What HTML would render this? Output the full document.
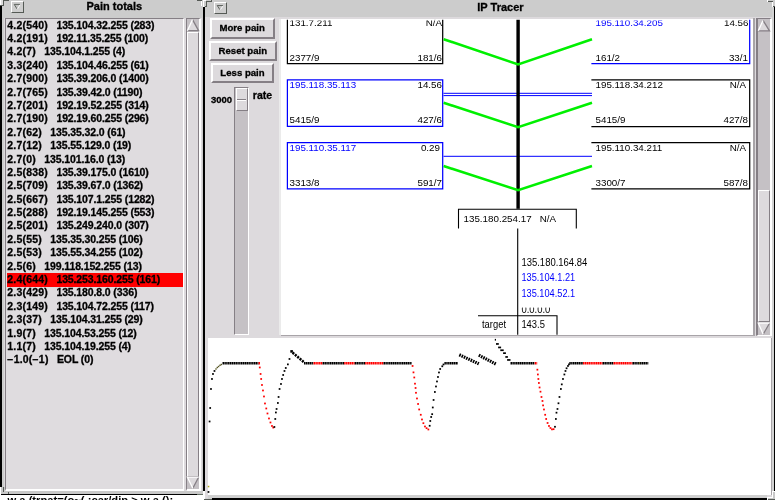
<!DOCTYPE html>
<html><head><meta charset="utf-8"><title>IP Tracer</title>
<style>
html,body{margin:0;padding:0;}
body{width:775px;height:500px;overflow:hidden;position:relative;background:#cccccc;font-family:"Liberation Sans",sans-serif;}
#root{will-change:transform;position:absolute;left:0;top:0;width:775px;height:500px;overflow:hidden;}
#root>div,#root>svg{position:absolute;}
.t{white-space:pre;color:#000;}
.lb,.ttl,.btn{-webkit-text-stroke:0.3px #000;}
.lb{font-weight:bold;font-size:10.5px;line-height:13.36px;transform:scaleY(0.96);transform-origin:0 55%;}
.ttl{font-weight:bold;font-size:11px;line-height:14px;}
.gar{font-size:11.2px;line-height:13px;font-weight:bold;}
.btn.mp{padding-right:1px;}
.btn{box-sizing:border-box;background:#dddadd;border-top:2.3px solid #fff;border-left:2.3px solid #fff;border-right:2.3px solid #857f85;border-bottom:2.4px solid #857f85;font-weight:bold;font-size:9.6px;line-height:15.6px;text-align:center;color:#000;}
svg text{font-family:"Liberation Sans",sans-serif;font-size:9.7px;}
</style></head><body><div id="root">
<div style="left:4px;top:18px;width:197.5px;height:474px;background:#dddadd;"></div>
<div style="left:0px;top:5.7px;width:1.9px;height:481px;background:#000;"></div>
<div style="left:4.5px;top:18px;width:179.5px;height:473px;background:#dfdcdf;border-top:1px solid #857f85;border-left:1px solid #857f85;border-right:1.5px solid #fff;border-bottom:2.2px solid #fff;box-sizing:border-box;"></div>
<div style="left:7px;top:273.3px;width:176px;height:13.6px;background:#ff0000;"></div>
<div class="t lb" style="left:7.3px;top:18.7px;"><span style="letter-spacing:0.2px">4.2(540)</span><span style="margin-left:8.4px;letter-spacing:-0.12px">135.104.32.255 (283)</span></div>
<div class="t lb" style="left:7.3px;top:32.09px;"><span style="letter-spacing:0.2px">4.2(191)</span><span style="margin-left:8.4px;letter-spacing:-0.12px">192.11.35.255 (100)</span></div>
<div class="t lb" style="left:7.3px;top:45.47px;"><span style="letter-spacing:0.2px">4.2(7)</span><span style="margin-left:8.4px;letter-spacing:-0.12px">135.104.1.255 (4)</span></div>
<div class="t lb" style="left:7.3px;top:58.86px;"><span style="letter-spacing:0.2px">3.3(240)</span><span style="margin-left:8.4px;letter-spacing:-0.12px">135.104.46.255 (61)</span></div>
<div class="t lb" style="left:7.3px;top:72.24px;"><span style="letter-spacing:0.2px">2.7(900)</span><span style="margin-left:8.4px;letter-spacing:-0.12px">135.39.206.0 (1400)</span></div>
<div class="t lb" style="left:7.3px;top:85.63px;"><span style="letter-spacing:0.2px">2.7(765)</span><span style="margin-left:8.4px;letter-spacing:-0.12px">135.39.42.0 (1190)</span></div>
<div class="t lb" style="left:7.3px;top:99.02px;"><span style="letter-spacing:0.2px">2.7(201)</span><span style="margin-left:8.4px;letter-spacing:-0.12px">192.19.52.255 (314)</span></div>
<div class="t lb" style="left:7.3px;top:112.4px;"><span style="letter-spacing:0.2px">2.7(190)</span><span style="margin-left:8.4px;letter-spacing:-0.12px">192.19.60.255 (296)</span></div>
<div class="t lb" style="left:7.3px;top:125.79px;"><span style="letter-spacing:0.2px">2.7(62)</span><span style="margin-left:8.4px;letter-spacing:-0.12px">135.35.32.0 (61)</span></div>
<div class="t lb" style="left:7.3px;top:139.17px;"><span style="letter-spacing:0.2px">2.7(12)</span><span style="margin-left:8.4px;letter-spacing:-0.12px">135.55.129.0 (19)</span></div>
<div class="t lb" style="left:7.3px;top:152.56px;"><span style="letter-spacing:0.2px">2.7(0)</span><span style="margin-left:8.4px;letter-spacing:-0.12px">135.101.16.0 (13)</span></div>
<div class="t lb" style="left:7.3px;top:165.95px;"><span style="letter-spacing:0.2px">2.5(838)</span><span style="margin-left:8.4px;letter-spacing:-0.12px">135.39.175.0 (1610)</span></div>
<div class="t lb" style="left:7.3px;top:179.33px;"><span style="letter-spacing:0.2px">2.5(709)</span><span style="margin-left:8.4px;letter-spacing:-0.12px">135.39.67.0 (1362)</span></div>
<div class="t lb" style="left:7.3px;top:192.72px;"><span style="letter-spacing:0.2px">2.5(667)</span><span style="margin-left:8.4px;letter-spacing:-0.12px">135.107.1.255 (1282)</span></div>
<div class="t lb" style="left:7.3px;top:206.1px;"><span style="letter-spacing:0.2px">2.5(288)</span><span style="margin-left:8.4px;letter-spacing:-0.12px">192.19.145.255 (553)</span></div>
<div class="t lb" style="left:7.3px;top:219.49px;"><span style="letter-spacing:0.2px">2.5(201)</span><span style="margin-left:8.4px;letter-spacing:-0.12px">135.249.240.0 (307)</span></div>
<div class="t lb" style="left:7.3px;top:232.88px;"><span style="letter-spacing:0.2px">2.5(55)</span><span style="margin-left:8.4px;letter-spacing:-0.12px">135.35.30.255 (106)</span></div>
<div class="t lb" style="left:7.3px;top:246.26px;"><span style="letter-spacing:0.2px">2.5(53)</span><span style="margin-left:8.4px;letter-spacing:-0.12px">135.55.34.255 (102)</span></div>
<div class="t lb" style="left:7.3px;top:259.65px;"><span style="letter-spacing:0.2px">2.5(6)</span><span style="margin-left:8.4px;letter-spacing:-0.12px">199.118.152.255 (13)</span></div>
<div class="t lb" style="left:7.3px;top:273.03px;"><span style="letter-spacing:0.2px">2.4(644)</span><span style="margin-left:8.4px;letter-spacing:-0.12px">135.253.160.255 (161)</span></div>
<div class="t lb" style="left:7.3px;top:286.42px;"><span style="letter-spacing:0.2px">2.3(429)</span><span style="margin-left:8.4px;letter-spacing:-0.12px">135.180.8.0 (336)</span></div>
<div class="t lb" style="left:7.3px;top:299.81px;"><span style="letter-spacing:0.2px">2.3(149)</span><span style="margin-left:8.4px;letter-spacing:-0.12px">135.104.72.255 (117)</span></div>
<div class="t lb" style="left:7.3px;top:313.19px;"><span style="letter-spacing:0.2px">2.3(37)</span><span style="margin-left:8.4px;letter-spacing:-0.12px">135.104.31.255 (29)</span></div>
<div class="t lb" style="left:7.3px;top:326.58px;"><span style="letter-spacing:0.2px">1.9(7)</span><span style="margin-left:8.4px;letter-spacing:-0.12px">135.104.53.255 (12)</span></div>
<div class="t lb" style="left:7.3px;top:339.96px;"><span style="letter-spacing:0.2px">1.1(7)</span><span style="margin-left:8.4px;letter-spacing:-0.12px">135.104.19.255 (4)</span></div>
<div class="t lb" style="left:7.3px;top:353.35px;"><span style="letter-spacing:0.2px">−1.0(−1)</span><span style="margin-left:8.4px;letter-spacing:-0.12px">EOL (0)</span></div>
<div style="left:186px;top:18px;width:15px;height:473px;background:#c5c1c5;border-top:1px solid #857f85;border-left:1px solid #857f85;border-right:2px solid #fff;border-bottom:2px solid #fff;box-sizing:border-box;"></div>
<div style="left:187px;top:32px;width:12px;height:444.5px;background:#dddadd;border-top:1px solid #fff;border-left:1px solid #fff;border-right:1.5px solid #857f85;border-bottom:1px solid #857f85;box-sizing:border-box;"></div>
<div style="left:1.8px;top:491px;width:201.2px;height:3px;background:#c8c8c8;"></div>
<div style="left:1.4px;top:494px;width:195.6px;height:0.9px;background:#000;"></div>
<div style="left:197px;top:494px;width:5.7px;height:0.9px;background:#667066;"></div>
<div style="left:0px;top:494.9px;width:203px;height:5.1px;background:#fff;"></div>
<div style="left:0px;top:487px;width:1.2px;height:8px;background:#fff;"></div>
<div style="left:1.2px;top:487px;width:3.4px;height:7px;background:#c8c8c8;"></div>
<div style="left:3px;top:487px;width:0.9px;height:5px;background:#555a55;"></div>
<div style="left:8px;top:492px;width:0.9px;height:2.4px;background:#555a55;"></div>
<div style="left:203px;top:490.8px;width:1.6px;height:9.2px;background:#fff;"></div>
<div style="left:204.6px;top:490.8px;width:3px;height:9.2px;background:#d4d4d4;"></div>
<div style="left:205.9px;top:492px;width:0.9px;height:4.8px;background:#555a55;"></div>
<div style="left:204px;top:498.9px;width:7.8px;height:1.1px;background:#555a55;"></div>
<div style="left:207.6px;top:495.3px;width:4px;height:2.4px;background:#d4d4d4;"></div>
<div class="t gar" style="left:7.5px;top:493.6px;">w a,(trnat=(o~(.:car/dip &gt; w a,():</div>
<div style="left:11px;top:1.1px;width:13px;height:11.8px;background:#cecece;border-top:1px solid #fff;border-left:1px solid #fff;border-right:1px solid #555a55;border-bottom:1px solid #555a55;box-sizing:border-box;"></div>
<div class="t ttl" style="left:86.5px;top:-1.5px;">Pain totals</div>
<div style="left:205.3px;top:17.3px;width:566.3px;height:480.3px;background:#dddadd;"></div>
<div style="left:771.6px;top:6px;width:2.2px;height:486px;background:#d2d2d2;"></div>
<div style="left:203.15px;top:6.8px;width:2.25px;height:484.2px;background:#000;"></div>
<div style="left:773.8px;top:7px;width:1.2px;height:484px;background:#000;"></div>
<div style="left:197px;top:0px;width:4.8px;height:0.9px;background:#555a55;"></div>
<div style="left:201px;top:1px;width:1px;height:5.2px;background:#fff;"></div>
<div style="left:202.6px;top:0px;width:1.6px;height:6.6px;background:#fff;"></div>
<div style="left:204.2px;top:0px;width:2px;height:1px;background:#fff;"></div>
<div style="left:206px;top:0.7px;width:6px;height:0.9px;background:#555a55;"></div>
<div style="left:206px;top:1.5px;width:1px;height:5px;background:#555a55;"></div>
<div style="left:204.6px;top:6px;width:2.4px;height:0.9px;background:#555a55;"></div>
<div style="left:211px;top:0px;width:1px;height:1.5px;background:#555a55;"></div>
<div style="left:767px;top:0px;width:1px;height:2px;background:#fff;"></div>
<div style="left:768px;top:1px;width:5px;height:1px;background:#555a55;"></div>
<div style="left:771.8px;top:2px;width:1.2px;height:4.6px;background:#fff;"></div>
<div style="left:773px;top:6px;width:2px;height:1px;background:#555a55;"></div>
<div style="left:0px;top:0px;width:1px;height:5px;background:#fff;"></div>
<div style="left:1px;top:0px;width:2px;height:4.6px;background:#dedede;"></div>
<div style="left:3px;top:0.4px;width:1px;height:5.4px;background:#555a55;"></div>
<div style="left:4px;top:0px;width:5px;height:0.6px;background:#555a55;"></div>
<div style="left:0.4px;top:5px;width:3.6px;height:0.8px;background:#555a55;"></div>
<div style="left:214.1px;top:2.2px;width:13px;height:11.7px;background:#cecece;border-top:1px solid #fff;border-left:1px solid #fff;border-right:1px solid #555a55;border-bottom:1px solid #555a55;box-sizing:border-box;"></div>
<div class="t ttl" style="left:477.3px;top:-0.3px;">IP Tracer</div>
<div class="btn mp" style="left:209.8px;top:18.2px;width:65.6px;height:20.8px;">More pain</div>
<div class="btn" style="left:208.7px;top:40.5px;width:68.3px;height:20.3px;">Reset pain</div>
<div class="btn" style="left:211px;top:63.1px;width:63px;height:19.8px;">Less pain</div>
<div style="left:234.2px;top:86.6px;width:14.8px;height:248.4px;background:#c5c1c5;border-top:1.5px solid #857f85;border-left:1.5px solid #857f85;border-right:1.5px solid #fff;border-bottom:1.5px solid #fff;box-sizing:border-box;"></div>
<div style="left:236px;top:88px;width:11.5px;height:22.5px;background:#dddadd;border-top:1px solid #fff;border-left:1px solid #fff;border-right:1.5px solid #857f85;border-bottom:1.5px solid #857f85;box-sizing:border-box;"></div>
<div style="left:237px;top:98.5px;width:9px;height:1px;background:#857f85;"></div>
<div style="left:237px;top:99.5px;width:9px;height:1px;background:#fff;"></div>
<div class="t lb" style="left:211px;top:93.2px;font-size:9.5px;">3000</div>
<div class="t lb" style="left:252.8px;top:89.2px;">rate</div>
<div style="left:279px;top:19.2px;width:2px;height:316px;background:#ebebeb;"></div>
<div style="left:280.9px;top:19.2px;width:472.1px;height:315.7px;background:#fff;"></div>
<div style="left:281px;top:334.8px;width:473.6px;height:1.2px;background:#a8a4a8;"></div>
<svg style="left:281px;top:19px" width="472" height="316" viewBox="281 19 472 316"><defs><clipPath id="cv"><rect x="281" y="19.7" width="472" height="315.1"/></clipPath></defs><g clip-path="url(#cv)"><path d="M287.4,10H442.7M287.4,63.5H442.7M287.4,10V63.5M442.7,10V63.5" stroke="#000" stroke-width="1.25" fill="none" stroke-linecap="square"/><path d="M287.4,79.8H442.7M287.4,126.3H442.7M287.4,79.8V126.3M442.7,79.8V126.3" stroke="#0000ff" stroke-width="1.25" fill="none" stroke-linecap="square"/><path d="M287.4,142.5H442.7M287.4,188.8H442.7M287.4,142.5V188.8M442.7,142.5V188.8" stroke="#0000ff" stroke-width="1.25" fill="none" stroke-linecap="square"/><path d="M592,10H749.7M592,63.5H749.7M749.7,10V63.5" stroke="#0000ff" stroke-width="1.25" fill="none" stroke-linecap="square"/><path d="M592,79.8H749.7M592,126.5H749.7M749.7,79.8V126.5" stroke="#000" stroke-width="1.25" fill="none" stroke-linecap="square"/><path d="M592,142.5H749.7M592,188.9H749.7M749.7,142.5V188.9" stroke="#000" stroke-width="1.25" fill="none" stroke-linecap="square"/><path d="M443.5,93.3H592M443.5,95.6H592M443.5,156.3H592" stroke="#0000ff" stroke-width="1" fill="none"/><rect x="516.4" y="19" width="3.4" height="189.8" fill="#000"/><polyline points="443.6,39.2 518.1,64.5 592,39.2" stroke="#00f000" stroke-width="2.6" fill="none" stroke-linejoin="miter"/><polyline points="443.6,102.8 518.1,127.2 592,102.8" stroke="#00f000" stroke-width="2.6" fill="none" stroke-linejoin="miter"/><polyline points="443.6,166 518.1,190.2 592,166" stroke="#00f000" stroke-width="2.6" fill="none" stroke-linejoin="miter"/><path d="M458.5,228.5V209.3H576.3V228.5" stroke="#000" stroke-width="1.1" fill="none"/><path d="M517.7,228.5V336" stroke="#000" stroke-width="1.1" fill="none"/><path d="M478,315.7H557V336" stroke="#000" stroke-width="1.1" fill="none"/><text transform="translate(289.5,25.6) scale(1.0,1)" fill="#000" text-anchor="start" style="font-size:9.8px">131.7.211</text><text transform="translate(442,25.6) scale(1.0,1)" fill="#000" text-anchor="end" style="font-size:9.8px">N/A</text><text transform="translate(289.5,60.8) scale(1.0,1)" fill="#000" text-anchor="start" style="font-size:9.8px">2377/9</text><text transform="translate(442,60.8) scale(1.0,1)" fill="#000" text-anchor="end" style="font-size:9.8px">181/6</text><text transform="translate(289.5,88.2) scale(1.0,1)" fill="#0000ff" text-anchor="start" style="font-size:9.8px">195.118.35.113</text><text transform="translate(442,88.2) scale(1.0,1)" fill="#000" text-anchor="end" style="font-size:9.8px">14.56</text><text transform="translate(289.5,123) scale(1.0,1)" fill="#000" text-anchor="start" style="font-size:9.8px">5415/9</text><text transform="translate(442,123) scale(1.0,1)" fill="#000" text-anchor="end" style="font-size:9.8px">427/6</text><text transform="translate(289.5,150.8) scale(1.0,1)" fill="#0000ff" text-anchor="start" style="font-size:9.8px">195.110.35.117</text><text transform="translate(440,150.8) scale(1.0,1)" fill="#000" text-anchor="end" style="font-size:9.8px">0.29</text><text transform="translate(289.5,185.8) scale(1.0,1)" fill="#000" text-anchor="start" style="font-size:9.8px">3313/8</text><text transform="translate(442,185.8) scale(1.0,1)" fill="#000" text-anchor="end" style="font-size:9.8px">591/7</text><text transform="translate(595.5,25.6) scale(1.0,1)" fill="#0000ff" text-anchor="start" style="font-size:9.8px">195.110.34.205</text><text transform="translate(748.5,25.6) scale(1.0,1)" fill="#000" text-anchor="end" style="font-size:9.8px">14.56</text><text transform="translate(595.5,60.8) scale(1.0,1)" fill="#000" text-anchor="start" style="font-size:9.8px">161/2</text><text transform="translate(748,60.8) scale(1.0,1)" fill="#000" text-anchor="end" style="font-size:9.8px">33/1</text><text transform="translate(595.5,88.2) scale(1.0,1)" fill="#000" text-anchor="start" style="font-size:9.8px">195.118.34.212</text><text transform="translate(746,88.2) scale(1.0,1)" fill="#000" text-anchor="end" style="font-size:9.8px">N/A</text><text transform="translate(595.5,123) scale(1.0,1)" fill="#000" text-anchor="start" style="font-size:9.8px">5415/9</text><text transform="translate(748,123) scale(1.0,1)" fill="#000" text-anchor="end" style="font-size:9.8px">427/8</text><text transform="translate(595.5,150.8) scale(1.0,1)" fill="#000" text-anchor="start" style="font-size:9.8px">195.110.34.211</text><text transform="translate(746,150.8) scale(1.0,1)" fill="#000" text-anchor="end" style="font-size:9.8px">N/A</text><text transform="translate(595.5,185.8) scale(1.0,1)" fill="#000" text-anchor="start" style="font-size:9.8px">3300/7</text><text transform="translate(748,185.8) scale(1.0,1)" fill="#000" text-anchor="end" style="font-size:9.8px">587/8</text><text transform="translate(463.5,222.3) scale(1.0,1)" fill="#000" text-anchor="start" style="font-size:9.8px">135.180.254.17&#160;&#160;&#160;N/A</text><text transform="translate(521.4,266) scale(0.904,1)" fill="#000" text-anchor="start" style="font-size:10.5px">135.180.164.84</text><text transform="translate(521.4,281.1) scale(0.878,1)" fill="#0000ff" text-anchor="start" style="font-size:10.5px">135.104.1.21</text><text transform="translate(521.4,297) scale(0.878,1)" fill="#0000ff" text-anchor="start" style="font-size:10.5px">135.104.52.1</text><text transform="translate(521.4,312.8) scale(0.9,1)" fill="#000" text-anchor="start" style="font-size:10.5px">0.0.0.0</text><text transform="translate(482,328.3) scale(0.92,1)" fill="#000" text-anchor="start" style="font-size:10.2px">target</text><text transform="translate(521.4,328.3) scale(0.92,1)" fill="#000" text-anchor="start" style="font-size:10.2px">143.5</text><rect x="288.6" y="19" width="153.2" height="1.5" fill="#fff"/><rect x="593" y="19" width="155.8" height="1.5" fill="#fff"/><rect x="520" y="302" width="34" height="5.6" fill="#fff"/></g></svg>
<div style="left:753px;top:18px;width:1.6px;height:318px;background:#a8a4a8;"></div>
<div style="left:756px;top:18px;width:15.6px;height:318px;background:#c5c1c5;border-top:1px solid #857f85;border-left:2px solid #857f85;border-right:2px solid #fff;border-bottom:1.5px solid #fff;box-sizing:border-box;"></div>
<div style="left:758px;top:190px;width:11.6px;height:131.6px;background:#dddadd;border-top:1px solid #fff;border-left:1px solid #fff;border-right:1.8px solid #857f85;border-bottom:1.8px solid #857f85;box-sizing:border-box;"></div>
<div style="left:207.7px;top:337.9px;width:563.2px;height:157.5px;background:#fff;"></div>
<div style="left:770.9px;top:337.9px;width:1px;height:157.5px;background:#a8a4a8;"></div>
<div style="left:207.7px;top:495.2px;width:559.3px;height:2.6px;background:#d0d0d0;"></div>
<div style="left:211.8px;top:497.8px;width:555px;height:2.2px;background:#000;"></div>
<div style="left:772.4px;top:490.8px;width:2.6px;height:1.1px;background:#fff;"></div>
<div style="left:771.8px;top:491px;width:1.2px;height:6.4px;background:#fff;"></div>
<div style="left:773px;top:491.9px;width:2px;height:8.1px;background:#c8c8c8;"></div>
<div style="left:767px;top:496.5px;width:6px;height:1px;background:#fff;"></div>
<div style="left:766.8px;top:497px;width:1.2px;height:3px;background:#fff;"></div>
<div style="left:768px;top:497.5px;width:7px;height:1.7px;background:#c8c8c8;"></div>
<div style="left:768px;top:499.2px;width:7px;height:0.8px;background:#555a55;"></div>
<svg style="left:207px;top:338px" width="564" height="158" viewBox="207 338 564 158"><rect x="207.6" y="491.1" width="1.75" height="1.75" fill="#000"/><rect x="208.7" y="420.6" width="1.75" height="1.75" fill="#000"/><rect x="209.3" y="407.1" width="1.75" height="1.75" fill="#000"/><rect x="210.1" y="388.1" width="1.75" height="1.75" fill="#000"/><rect x="211.1" y="378.1" width="1.75" height="1.75" fill="#000"/><rect x="212.1" y="373.1" width="1.75" height="1.75" fill="#000"/><rect x="213.6" y="370.1" width="1.75" height="1.75" fill="#000"/><rect x="207.8" y="485.8" width="1.5" height="1.5" fill="#b0a820"/><rect x="215.3" y="368.3" width="1.4" height="1.4" fill="#555522"/><rect x="216.6" y="366.8" width="1.4" height="1.4" fill="#555522"/><rect x="217.9" y="365.8" width="1.4" height="1.4" fill="#555522"/><rect x="219.3" y="364.6" width="1.4" height="1.4" fill="#555522"/><rect x="220.6" y="363.8" width="1.4" height="1.4" fill="#555522"/><path d="M222.5,363.3H258.5" stroke="#000" stroke-width="2.4" stroke-dasharray="1.5 0.35" fill="none"/><path d="M258.5,363.3H260.3" stroke="#ff0000" stroke-width="2.4" stroke-dasharray="1.5 0.35" fill="none"/><rect x="258.9" y="366.6" width="1.75" height="1.75" fill="#ff0000"/><rect x="259.7" y="373.1" width="1.75" height="1.75" fill="#ff0000"/><rect x="260.3" y="378.1" width="1.75" height="1.75" fill="#ff0000"/><rect x="261.1" y="384.1" width="1.75" height="1.75" fill="#ff0000"/><rect x="262.1" y="389.6" width="1.75" height="1.75" fill="#ff0000"/><rect x="263.1" y="395.6" width="1.75" height="1.75" fill="#ff0000"/><rect x="264.1" y="402.6" width="1.75" height="1.75" fill="#ff0000"/><rect x="265.4" y="407.6" width="1.75" height="1.75" fill="#ff0000"/><rect x="266.6" y="412.6" width="1.75" height="1.75" fill="#ff0000"/><rect x="268.1" y="417.6" width="1.75" height="1.75" fill="#ff0000"/><rect x="269.6" y="421.6" width="1.75" height="1.75" fill="#ff0000"/><rect x="271.1" y="425.1" width="1.75" height="1.75" fill="#ff0000"/><rect x="272.4" y="426.7" width="1.75" height="1.75" fill="#ff0000"/><rect x="273.5" y="426.1" width="1.75" height="1.75" fill="#000"/><rect x="274.4" y="418.1" width="1.75" height="1.75" fill="#000"/><rect x="275.0" y="411.6" width="1.75" height="1.75" fill="#000"/><rect x="275.7" y="408.1" width="1.75" height="1.75" fill="#000"/><rect x="277.0" y="402.1" width="1.75" height="1.75" fill="#000"/><rect x="277.7" y="396.1" width="1.75" height="1.75" fill="#000"/><rect x="278.7" y="388.1" width="1.75" height="1.75" fill="#000"/><rect x="280.1" y="383.1" width="1.75" height="1.75" fill="#000"/><rect x="281.1" y="378.1" width="1.75" height="1.75" fill="#000"/><rect x="282.3" y="374.1" width="1.75" height="1.75" fill="#000"/><rect x="283.6" y="370.1" width="1.75" height="1.75" fill="#000"/><rect x="284.9" y="367.1" width="1.75" height="1.75" fill="#000"/><rect x="287.0" y="363.5" width="1.75" height="1.75" fill="#000"/><rect x="288.6" y="358.1" width="1.75" height="1.75" fill="#000"/><rect x="290.3" y="350.1" width="2.6" height="2.6" fill="#000"/><path d="M292.6,352.6L304.2,362.4" stroke="#000" stroke-width="2.6" stroke-dasharray="2 1.1" fill="none"/><path d="M304,363.3H313.5" stroke="#000" stroke-width="2.4" stroke-dasharray="1.5 0.35" fill="none"/><path d="M313.5,363.3H322.6" stroke="#ff0000" stroke-width="2.4" stroke-dasharray="1.5 0.35" fill="none"/><path d="M322.6,363.3H344.2" stroke="#000" stroke-width="2.4" stroke-dasharray="1.5 0.35" fill="none"/><path d="M344.2,363.3H354.7" stroke="#ff0000" stroke-width="2.4" stroke-dasharray="1.5 0.35" fill="none"/><path d="M354.7,363.3H365.2" stroke="#000" stroke-width="2.4" stroke-dasharray="1.5 0.35" fill="none"/><path d="M365.2,363.3H383.5" stroke="#ff0000" stroke-width="2.4" stroke-dasharray="1.5 0.35" fill="none"/><path d="M383.5,363.3H411.8" stroke="#000" stroke-width="2.4" stroke-dasharray="1.5 0.35" fill="none"/><rect x="411.7" y="365.1" width="1.75" height="1.75" fill="#ff0000"/><rect x="412.6" y="371.5" width="1.75" height="1.75" fill="#ff0000"/><rect x="413.4" y="376.6" width="1.75" height="1.75" fill="#ff0000"/><rect x="414.1" y="382.8" width="1.75" height="1.75" fill="#ff0000"/><rect x="414.7" y="387.1" width="1.75" height="1.75" fill="#ff0000"/><rect x="415.1" y="391.9" width="1.75" height="1.75" fill="#ff0000"/><rect x="416.1" y="397.6" width="1.75" height="1.75" fill="#ff0000"/><rect x="417.2" y="403.1" width="1.75" height="1.75" fill="#ff0000"/><rect x="418.3" y="408.6" width="1.75" height="1.75" fill="#ff0000"/><rect x="419.9" y="413.9" width="1.75" height="1.75" fill="#ff0000"/><rect x="421.1" y="418.6" width="1.75" height="1.75" fill="#ff0000"/><rect x="422.5" y="422.3" width="1.75" height="1.75" fill="#ff0000"/><rect x="424.1" y="425.6" width="1.75" height="1.75" fill="#ff0000"/><rect x="425.7" y="427.3" width="1.75" height="1.75" fill="#ff0000"/><rect x="427.5" y="428.6" width="1.75" height="1.75" fill="#ff0000"/><rect x="428.8" y="424.9" width="1.75" height="1.75" fill="#000"/><rect x="429.4" y="420.1" width="1.75" height="1.75" fill="#000"/><rect x="430.3" y="416.1" width="1.75" height="1.75" fill="#000"/><rect x="431.3" y="413.3" width="1.75" height="1.75" fill="#000"/><rect x="431.9" y="406.6" width="1.75" height="1.75" fill="#000"/><rect x="432.7" y="399.1" width="1.75" height="1.75" fill="#000"/><rect x="434.0" y="391.1" width="1.75" height="1.75" fill="#000"/><rect x="435.1" y="385.6" width="1.75" height="1.75" fill="#000"/><rect x="436.1" y="380.6" width="1.75" height="1.75" fill="#000"/><rect x="437.1" y="376.1" width="1.75" height="1.75" fill="#000"/><rect x="438.1" y="371.6" width="1.75" height="1.75" fill="#000"/><rect x="439.3" y="368.1" width="1.75" height="1.75" fill="#000"/><rect x="441.4" y="365.4" width="1.75" height="1.75" fill="#000"/><rect x="442.6" y="363.6" width="1.75" height="1.75" fill="#000"/><path d="M444.4,363.3H458" stroke="#000" stroke-width="2.4" stroke-dasharray="1.5 0.35" fill="none"/><path d="M459.3,354.8L478.8,363.8" stroke="#000" stroke-width="3.2" stroke-dasharray="1.6 0.9" fill="none"/><path d="M478.8,355.2L495.8,364" stroke="#000" stroke-width="3.2" stroke-dasharray="1.6 0.9" fill="none"/><rect x="494.8" y="338.9" width="1.2" height="1.7" fill="#000"/><rect x="496.0" y="343.1" width="2.8" height="1.7" fill="#000"/><rect x="498.1" y="346.6" width="3.0" height="1.7" fill="#000"/><rect x="500.3" y="349.4" width="3.4" height="1.7" fill="#000"/><rect x="503.1" y="352.3" width="2.8" height="1.7" fill="#000"/><rect x="505.3" y="356.1" width="2.6" height="1.7" fill="#000"/><rect x="507.1" y="359.1" width="3.4" height="1.7" fill="#000"/><path d="M510.5,363.3H534.7" stroke="#000" stroke-width="2.4" stroke-dasharray="1.5 0.35" fill="none"/><path d="M534.7,363.3H537.2" stroke="#ff0000" stroke-width="2.4" stroke-dasharray="1.5 0.35" fill="none"/><rect x="536.5" y="368.8" width="1.75" height="1.75" fill="#ff0000"/><rect x="537.0" y="373.6" width="1.75" height="1.75" fill="#ff0000"/><rect x="537.5" y="378.1" width="1.75" height="1.75" fill="#ff0000"/><rect x="538.0" y="382.1" width="1.75" height="1.75" fill="#ff0000"/><rect x="538.7" y="386.6" width="1.75" height="1.75" fill="#ff0000"/><rect x="539.6" y="390.8" width="1.75" height="1.75" fill="#ff0000"/><rect x="540.6" y="396.1" width="1.75" height="1.75" fill="#ff0000"/><rect x="541.6" y="400.1" width="1.75" height="1.75" fill="#ff0000"/><rect x="542.2" y="404.5" width="1.75" height="1.75" fill="#ff0000"/><rect x="543.1" y="408.6" width="1.75" height="1.75" fill="#ff0000"/><rect x="544.3" y="413.9" width="1.75" height="1.75" fill="#ff0000"/><rect x="545.3" y="418.1" width="1.75" height="1.75" fill="#ff0000"/><rect x="546.7" y="422.1" width="1.75" height="1.75" fill="#ff0000"/><rect x="548.1" y="425.1" width="1.75" height="1.75" fill="#ff0000"/><rect x="549.6" y="427.1" width="1.75" height="1.75" fill="#ff0000"/><rect x="551.1" y="428.5" width="1.75" height="1.75" fill="#ff0000"/><rect x="552.7" y="428.3" width="1.75" height="1.75" fill="#ff0000"/><rect x="554.1" y="425.9" width="1.75" height="1.75" fill="#000"/><rect x="555.0" y="418.1" width="1.75" height="1.75" fill="#000"/><rect x="555.6" y="411.8" width="1.75" height="1.75" fill="#000"/><rect x="556.6" y="408.1" width="1.75" height="1.75" fill="#000"/><rect x="557.6" y="402.4" width="1.75" height="1.75" fill="#000"/><rect x="558.6" y="396.1" width="1.75" height="1.75" fill="#000"/><rect x="560.0" y="388.1" width="1.75" height="1.75" fill="#000"/><rect x="560.9" y="383.5" width="1.75" height="1.75" fill="#000"/><rect x="562.1" y="378.1" width="1.75" height="1.75" fill="#000"/><rect x="563.5" y="373.6" width="1.75" height="1.75" fill="#000"/><rect x="564.6" y="370.1" width="1.75" height="1.75" fill="#000"/><rect x="565.7" y="367.4" width="1.75" height="1.75" fill="#000"/><rect x="567.1" y="365.1" width="1.75" height="1.75" fill="#000"/><rect x="568.1" y="363.5" width="1.75" height="1.75" fill="#000"/><path d="M569.3,363.3H583" stroke="#000" stroke-width="2.4" stroke-dasharray="1.5 0.35" fill="none"/><path d="M583,363.3H602.6" stroke="#ff0000" stroke-width="2.4" stroke-dasharray="1.5 0.35" fill="none"/><path d="M602.6,363.3H613.5" stroke="#000" stroke-width="2.4" stroke-dasharray="1.5 0.35" fill="none"/><path d="M613.5,363.3H632.5" stroke="#ff0000" stroke-width="2.4" stroke-dasharray="1.5 0.35" fill="none"/><path d="M632.5,363.3H648.3" stroke="#000" stroke-width="2.4" stroke-dasharray="1.5 0.35" fill="none"/><rect x="638.8" y="362.3" width="1.4" height="1.4" fill="#777722"/></svg>
<svg style="left:0px;top:0px" width="775" height="500" viewBox="0 0 775 500"><polygon points="192.5,19.6 187.4,30.7 198.6,30.7" fill="#dddadd"/><polyline points="192.5,19.6 198.6,30.7 187.4,30.7" stroke="#857f85" stroke-width="1.3" fill="none"/><polyline points="187.4,30.7 192.5,19.6" stroke="#fff" stroke-width="1.3" fill="none"/><polygon points="187.4,477.2 198.6,477.2 192.8,488.3" fill="#dddadd"/><polyline points="198.6,477.2 192.8,488.3" stroke="#857f85" stroke-width="1.3" fill="none"/><polyline points="192.8,488.3 187.4,477.2 198.6,477.2" stroke="#fff" stroke-width="1.3" fill="none"/><polygon points="763.0,20.4 758.3,30.8 769.5,30.8" fill="#dddadd"/><polyline points="763.0,20.4 769.5,30.8 758.3,30.8" stroke="#857f85" stroke-width="1.3" fill="none"/><polyline points="758.3,30.8 763.0,20.4" stroke="#fff" stroke-width="1.3" fill="none"/><polygon points="758.3,323.2 769.5,323.2 763.2,334.2" fill="#dddadd"/><polyline points="769.5,323.2 763.2,334.2" stroke="#857f85" stroke-width="1.3" fill="none"/><polyline points="763.2,334.2 758.3,323.2 769.5,323.2" stroke="#fff" stroke-width="1.3" fill="none"/><polygon points="14.2,4.4 19.9,4.4 17,8.9" fill="#c2c2c2"/><polyline points="17,8.9 14.2,4.4 19.9,4.4" stroke="#555a55" stroke-width="0.9" fill="none"/><polyline points="19.9,5.0 17.5,8.9" stroke="#fff" stroke-width="0.9" fill="none"/><polygon points="217.2,5.5 222.9,5.5 219.9,9.7" fill="#c2c2c2"/><polyline points="219.9,9.7 217.2,5.5 222.9,5.5" stroke="#555a55" stroke-width="0.9" fill="none"/><polyline points="222.9,6.1 220.4,9.7" stroke="#fff" stroke-width="0.9" fill="none"/></svg>
</div></body></html>
